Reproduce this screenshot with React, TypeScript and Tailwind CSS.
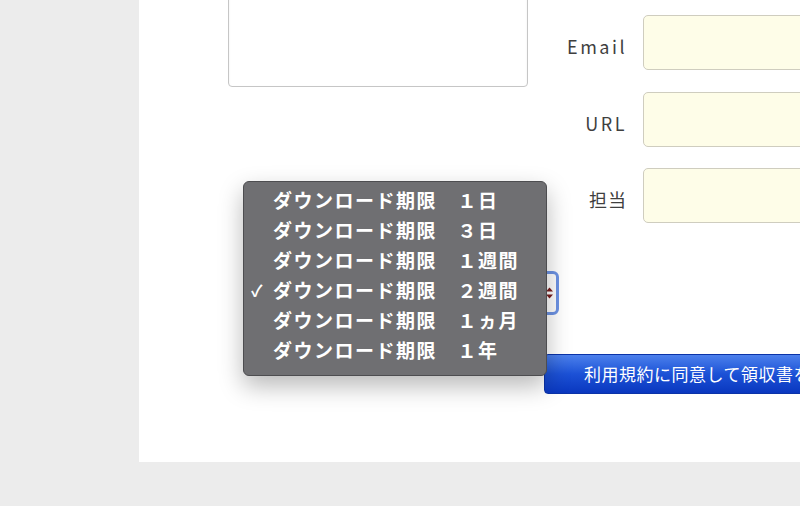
const OPTIONS = ['１日', '３日', '１週間', '２週間', '１ヵ月', '１年'];
const SELECTED = 3;

const FIELDS = [
  { label: 'Email', latin: true },
  { label: 'URL', latin: true },
  { label: '担当', latin: false },
];

function Field({ label, latin }: { label: string; latin: boolean }) {
  return (
    <div className="flex items-center">
      <label
        className={`w-[87px] pt-[8px] text-right text-[18px] text-[#3f3f3f] ${latin ? 'tracking-[2.5px]' : 'tracking-[1px]'}`}
      >
        {label}
      </label>
      <input
        type="text"
        className="ml-[16px] h-[55px] w-[220px] shrink-0 rounded-[5px] border border-[#cfcdbf] bg-[#fefde8] outline-none"
      />
    </div>
  );
}

export default function App() {
  return (
    <div
      className="h-[506px] w-[800px] overflow-hidden bg-[#ececec]"
      style={{ fontFamily: '"Noto Sans CJK JP", "Noto Sans", sans-serif' }}
    >
      <div className="relative ml-[139px] h-[462px] w-[661px] overflow-hidden bg-white">
        {/* textarea + contact fields */}
        <div className="flex items-start">
          <textarea className="-mt-[33px] ml-[89px] h-[120px] w-[300px] shrink-0 resize-none rounded-[4px] border border-[#c6c6c6] shadow-[inset_0_1px_2px_rgba(0,0,0,0.08)] outline-none" />
          <div className="ml-[12px] mt-[15px] flex flex-col gap-[21.5px]">
            {FIELDS.map((f) => (
              <Field key={f.label} label={f.label} latin={f.latin} />
            ))}
          </div>
        </div>

        {/* select (covered by its open menu) */}
        <div className="ml-[121px] mt-[48px] flex h-[44px] w-[299px] items-center justify-end rounded-[6px] border-[3px] border-[#6d93e4] bg-white pr-[2px]">
          <svg width="9" height="14" viewBox="0 0 9 14">
            <path d="M1 5.5 L4.5 1.5 L8 5.5 Z" fill="#7a1d1d" />
            <path d="M1 8.5 L4.5 12.5 L8 8.5 Z" fill="#7a1d1d" />
          </svg>
        </div>

        {/* submit button */}
        <button className="ml-[405px] mt-[39px] flex h-[40px] w-[320px] items-center whitespace-nowrap rounded-[4px] border border-[#0b33a8] bg-linear-to-b from-[#4c80ec] via-[#1c51d6] to-[#0a37bf] pl-[39px] text-[17px] tracking-[0.5px] text-white">
          利用規約に同意して領収書を発行
        </button>

        {/* open select menu */}
        <div className="absolute left-[104px] top-[181px] w-[304px] rounded-[6px] border border-[#4d4d50] bg-[#6f6f72] pb-[10px] pt-[3px] shadow-[0_10px_24px_rgba(0,0,0,0.28)]">
          {OPTIONS.map((o, i) => (
            <div key={o} className="flex h-[30px] items-center text-[19px] font-bold tracking-[1.5px] text-white">
              <span className="w-[29px] pl-[7px] text-[16px]">{i === SELECTED ? '✓' : ''}</span>
              <span>ダウンロード期限　{o}</span>
            </div>
          ))}
        </div>
      </div>
    </div>
  );
}
